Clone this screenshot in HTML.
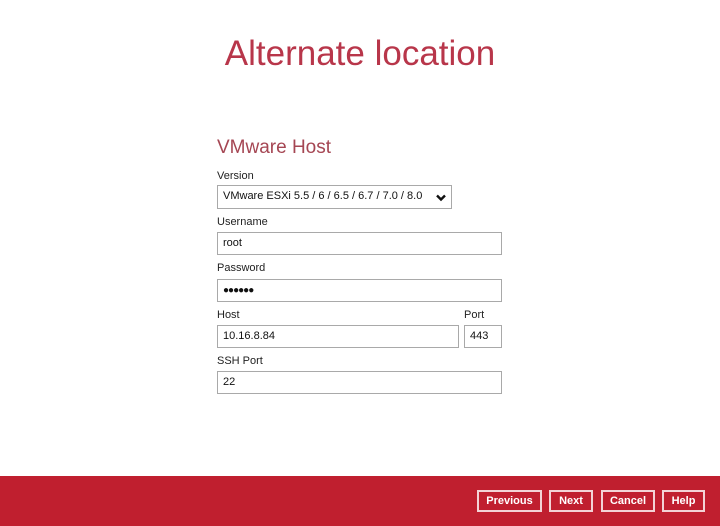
<!DOCTYPE html>
<html><head><meta charset="utf-8"><style>
*{margin:0;padding:0;box-sizing:border-box}
body{width:720px;height:526px;background:#fff;position:relative;font-family:"Liberation Sans",sans-serif;overflow:hidden}
.a{position:absolute}
.t{left:0;width:720px;text-align:center;top:34px;font-size:35px;color:#b8364a}
.h{left:217px;top:137px;font-size:19px;color:#a54653}
.l{font-size:11px;color:#222}
.i{border:1px solid #a9a9a9;background:#fff;font-size:11px;color:#111;padding-left:5px;line-height:21px}
.f{left:0;top:476px;width:720px;height:50px;background:#c01f2f}
.b{top:490px;height:22px;border:2px solid #f3d3d6;color:#fff;font-size:11px;text-align:center;line-height:18px;font-weight:bold}
</style></head><body>
<div class="a t">Alternate location</div>
<div class="a h">VMware Host</div>
<div class="a l" style="left:217px;top:170px">Version</div>
<div class="a i" style="left:217px;top:185px;width:235px;height:24px">VMware ESXi 5.5 / 6 / 6.5 / 6.7 / 7.0 / 8.0
<svg class="a" style="left:218px;top:8px" width="10" height="8" viewBox="0 0 10 8"><path d="M1 1.5 L5 5.5 L9 1.5" stroke="#111" stroke-width="2.4" fill="none"/></svg></div>
<div class="a l" style="left:217px;top:216px">Username</div>
<div class="a i" style="left:217px;top:232px;width:285px;height:23px">root</div>
<div class="a l" style="left:217px;top:262px">Password</div>
<div class="a i" style="left:217px;top:279px;width:285px;height:23px;font-size:10px;letter-spacing:-1px">●●●●●●</div>
<div class="a l" style="left:217px;top:309px">Host</div>
<div class="a l" style="left:464px;top:309px">Port</div>
<div class="a i" style="left:217px;top:325px;width:242px;height:23px">10.16.8.84</div>
<div class="a i" style="left:464px;top:325px;width:38px;height:23px">443</div>
<div class="a l" style="left:217px;top:355px">SSH Port</div>
<div class="a i" style="left:217px;top:371px;width:285px;height:23px">22</div>
<div class="a f"></div>
<div class="a b" style="left:477px;width:65px">Previous</div>
<div class="a b" style="left:549px;width:44px">Next</div>
<div class="a b" style="left:601px;width:54px">Cancel</div>
<div class="a b" style="left:662px;width:43px">Help</div>
</body></html>
